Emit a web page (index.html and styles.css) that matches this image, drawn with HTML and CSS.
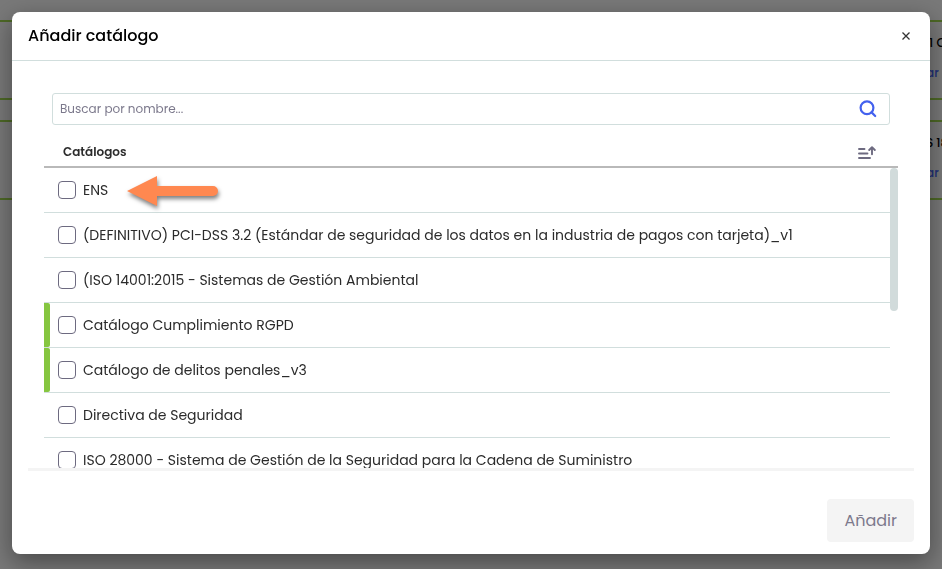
FILE: index.html
```html
<!DOCTYPE html>
<html lang="es">
<head>
    <meta charset="utf-8">
    <meta name="viewport" content="width=device-width, initial-scale=1">
    <title>Añadir catálogo</title>

    <link rel="stylesheet" href="styles.css">
</head>
<body>

<div class="page">
    <div class="card">
        <div class="card-text">
            <strong>&nbsp;1 C</strong>
            <a href="#">ar</a>
        </div>
    </div>
    <div class="card">
        <div class="card-text">
            <strong>S 18</strong>
            <a href="#">ar</a>
        </div>
    </div>
</div>

<div class="overlay">
    <div class="modal" role="dialog" aria-labelledby="modal-title">
        <div class="modal-header">
            <h1 id="modal-title">Añadir catálogo</h1>
            <button class="close" type="button" aria-label="Cerrar">
                <svg width="10" height="10" viewBox="0 0 10 10" fill="none" stroke="#333" stroke-width="1.3">
                    <path d="M1.5 1.5l7 7M8.5 1.5l-7 7"/>
                </svg>
            </button>
        </div>

        <div class="modal-body">
            <div class="search">
                <input type="text" placeholder="Buscar por nombre..." aria-label="Buscar por nombre">
                <button type="button" aria-label="Buscar">
                    <svg width="18" height="18" viewBox="0 0 18 18" fill="none" stroke="#4361ee" stroke-width="2.2">
                        <circle cx="8" cy="7.8" r="6.4"/>
                        <path d="M12.6 12.4l3.6 3.6" stroke-linecap="round"/>
                    </svg>
                </button>
            </div>

            <div class="list-header">
                <span>Catálogos</span>
                <button type="button" aria-label="Ordenar">
                    <svg width="18" height="16" viewBox="0 0 18 16" fill="none" stroke="#6d6a80" stroke-width="1.9" stroke-linecap="round" stroke-linejoin="round">
                        <path d="M1 5h5.5M1 9.5h8.5M1 14h11M14 10.2V3.6M11.2 6L14 3.2 16.8 6"/>
                    </svg>
                </button>
            </div>

            <div class="list">
                <div class="rows">
                    <label class="row">
                        <input type="checkbox"><span>ENS</span>
                        <!-- Flecha que señala el catálogo -->
                        <svg class="arrow" width="104" height="44" viewBox="0 0 104 44" fill="#ff8850">
                            <path d="M5 18L35 3v10h56a5 5 0 0 1 0 10H35v10z"/>
                        </svg>
                    </label>
                    <label class="row"><input type="checkbox"><span>(DEFINITIVO) PCI-DSS 3.2 (Estándar de seguridad de los datos en la industria de pagos con tarjeta)_v1</span></label>
                    <label class="row"><input type="checkbox"><span>(ISO 14001:2015 - Sistemas de Gestión Ambiental</span></label>
                    <label class="row marked"><input type="checkbox"><span>Catálogo Cumplimiento RGPD</span></label>
                    <label class="row marked"><input type="checkbox"><span>Catálogo de delitos penales_v3</span></label>
                    <label class="row"><input type="checkbox"><span>Directiva de Seguridad</span></label>
                    <label class="row"><input type="checkbox"><span>ISO 28000 - Sistema de Gestión de la Seguridad para la Cadena de Suministro</span></label>
                </div>
                <div class="scrollbar"><div class="thumb"></div></div>
            </div>
        </div>

        <div class="modal-footer">
            <button class="add" type="button" disabled>Añadir</button>
        </div>
    </div>
</div>

</body>
</html>
```

FILE: styles.css
```css
* {
    box-sizing: border-box;
}
body {
    margin: 0;
    overflow: hidden;
    font-family: Poppins, Inter, sans-serif;
    font-size: 14px;
    color: #2b2b2b;
    background-color: #f0f0f0;
}
button {
    padding: 0;
    border: 0;
    background: none;
    font-family: inherit;
    cursor: pointer;
}
svg {
    display: block;
}

/* Pagina de fondo */
.page {
    display: grid;
    gap: 20px;
    padding-top: 20px;
}
.card {
    display: flex;
    justify-content: flex-end;
    height: 80px;
    border-top: 2px solid #9ad04c;
    border-bottom: 2px solid #9ad04c;
}
.card-text {
    display: flex;
    flex-direction: column;
    gap: 12px;
    width: 16px;
    padding-top: 12px;
    white-space: nowrap;
    font-size: 12px;
    line-height: 18px;
}
.card-text strong {
    font-weight: 500;
    color: #000;
}
.card-text a {
    font-weight: 500;
    color: #4361ee;
    text-decoration: none;
}

/* Ventana modal */
.overlay {
    position: fixed;
    inset: 0;
    display: flex;
    padding: 12px 12px 15px;
    background-color: rgba(0, 0, 0, 0.5);
}
.modal {
    display: flex;
    flex-direction: column;
    flex: 1;
    min-width: 0;
    border-radius: 8px;
    background-color: #fff;
    box-shadow: 0 8px 24px rgba(0, 0, 0, 0.4);
}
.modal-header {
    display: flex;
    align-items: center;
    justify-content: space-between;
    height: 49px;
    padding: 0 19px 0 16px;
    border-bottom: 1px solid #d1dedd;
}
.modal-header h1 {
    margin: 0;
    font-size: 16px;
    font-weight: 500;
    line-height: 26px;
    color: #000;
}
.modal-body {
    display: flex;
    flex-direction: column;
    flex: 1;
    min-height: 0;
    margin: 0 16px;
    padding: 32px 16px 0;
    border-bottom: 3px solid #f4f4f4;
}
.search {
    display: flex;
    align-items: center;
    height: 32px;
    margin: 0 8px;
    padding: 0 12px 0 7px;
    border: 1px solid #d1dedd;
    border-radius: 3px;
}
.search input {
    flex: 1;
    min-width: 0;
    padding: 0;
    border: 0;
    outline: 0;
    font-family: inherit;
    font-size: 12px;
}
.search input::placeholder {
    color: #7c798c;
}
.list-header {
    display: flex;
    align-items: center;
    justify-content: space-between;
    height: 43px;
    padding: 12px 22px 0 19px;
    border-bottom: 2px solid #b9b9b9;
    font-size: 12px;
    font-weight: 600;
}
.list {
    display: flex;
    flex: 1;
    min-height: 0;
    overflow: hidden;
}
.rows {
    flex: 1;
    min-width: 0;
}
.row {
    position: relative;
    display: flex;
    align-items: center;
    gap: 7px;
    height: 45px;
    padding-left: 14px;
    border-bottom: 1px solid #d1dedd;
    white-space: nowrap;
    cursor: pointer;
}
.row input {
    appearance: none;
    width: 18px;
    height: 18px;
    margin: 0;
    border: 1px solid #6d6a80;
    border-radius: 4px;
}
.row input:checked {
    background-color: #4361ee;
}
.row.marked::before {
    content: "";
    position: absolute;
    top: 0;
    bottom: 0;
    left: 0;
    width: 6px;
    border-radius: 0 2px 2px 0;
    background-color: #86c640;
}
.arrow {
    position: absolute;
    top: 5px;
    left: 78px;
    filter: drop-shadow(1px 3px 2px rgba(0, 0, 0, 0.5));
}
.scrollbar {
    width: 8px;
}
.thumb {
    height: 143px;
    border-radius: 4px;
    background-color: #d1dbdb;
}
.modal-footer {
    display: flex;
    justify-content: flex-end;
    padding: 28px 16px 12px;
}
.add {
    height: 43px;
    padding: 0 17px;
    border-radius: 4px;
    font-size: 16px;
    color: #7c798c;
    background-color: #f4f4f4;
}
```
